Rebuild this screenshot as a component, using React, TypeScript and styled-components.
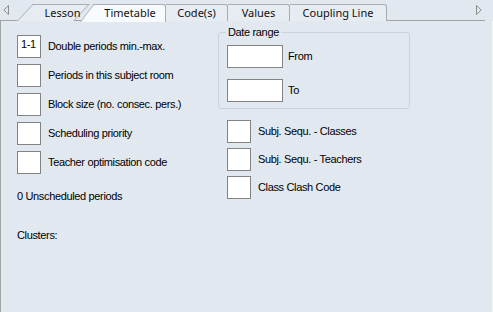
import React from "react";
import styled, { createGlobalStyle, css } from "styled-components";

const Global = createGlobalStyle`
  html, body { margin: 0; padding: 0; background: #e2e8f0; }
  * { box-sizing: border-box; }
`;

const Page = styled.div`
  width: 493px;
  height: 312px;
  background: #e2e8f0;
  display: flex;
  flex-direction: column;
  overflow: hidden;
  font-family: "Liberation Sans", Arial, sans-serif;
  font-size: 11px;
  letter-spacing: -0.35px;
  color: #000;
`;

const TabStrip = styled.div`
  height: 21px;
  display: flex;
  align-items: flex-end;
  position: relative;
  padding-left: 3px;
  &::after {
    content: "";
    position: absolute;
    left: 0;
    width: 485px;
    bottom: 0;
    height: 1px;
    background: #a3a3a3;
  }
`;

const Arrow = styled.svg`
  display: block;
  flex: none;
`;

const ArrowSlot = styled.div<{ $side: "left" | "right" }>`
  width: 8px;
  height: 21px;
  display: flex;
  align-items: center;
  padding-bottom: 2px;
  ${(p) =>
    p.$side === "left"
      ? css`margin-right: 6px;`
      : css`margin-left: auto; margin-right: 9px;`}
`;

type Shape = "parallelogram" | "slantLeft" | "rect";

const Tab = styled.div<{ $shape: Shape; $selected?: boolean; $w: number }>`
  position: relative;
  isolation: isolate;
  flex: none;
  width: ${(p) => p.$w}px;
  height: 17px;
  display: flex;
  align-items: center;
  justify-content: center;
  font-family: "Noto Sans", "Open Sans", sans-serif;
  font-size: 11px;
  letter-spacing: 0;
  color: #111;
  padding-bottom: 1px;
  z-index: ${(p) => (p.$selected ? 3 : 1)};
  ${(p) =>
    p.$shape === "parallelogram" &&
    css`
      &::before {
        content: "";
        position: absolute;
        inset: 0;
        background: #e6ecf2;
        border: 1px solid #a9adb2;
        border-bottom: none;
        transform: skewX(-43deg);
        transform-origin: bottom left;
        z-index: -1;
      }
    `}
  ${(p) =>
    p.$shape === "slantLeft" &&
    css`
      height: 18px;
      margin-bottom: -1px;
      padding-bottom: 2px;
      &::before {
        content: "";
        position: absolute;
        top: 0;
        bottom: 0;
        left: 0;
        width: 40px;
        background: ${p.$selected ? "#f8fbfd" : "#e6ecf2"};
        border-left: 1px solid #a9adb2;
        border-top: 1px solid #a9adb2;
        transform: skewX(-37deg);
        transform-origin: bottom left;
        z-index: -1;
      }
      &::after {
        content: "";
        position: absolute;
        top: 0;
        bottom: 0;
        left: 22px;
        right: 0;
        background: ${p.$selected ? "#f8fbfd" : "#e6ecf2"};
        border-top: 1px solid #a9adb2;
        border-right: 1px solid #a9adb2;
        border-top-right-radius: 3px;
        z-index: -1;
      }
    `}
  ${(p) =>
    p.$shape === "rect" &&
    css`
      background: #e6ecf2;
      border: 1px solid #a9adb2;
      border-bottom: none;
      border-left: none;
      border-top-right-radius: 3px;
    `}
`;

const TabLabel = styled.span<{ $offset?: number }>`
  position: relative;
  left: ${(p) => p.$offset ?? 0}px;
`;

const Panel = styled.div`
  flex: 1;
  display: flex;
  border-left: 1px solid #a3a3a3;
  border-right: 1px solid #f3f6f9;
`;

const LeftColumn = styled.div`
  width: 216px;
  padding: 14px 0 0 16px;
  display: flex;
  flex-direction: column;
`;

const FieldList = styled.div<{ $gap: number }>`
  display: flex;
  flex-direction: column;
  gap: ${(p) => p.$gap}px;
`;

const FieldRow = styled.div<{ $labelGap?: number }>`
  display: flex;
  align-items: center;
  gap: ${(p) => p.$labelGap ?? 7}px;
  height: 23px;
`;

const InputBox = styled.div<{ $w?: number }>`
  width: ${(p) => p.$w ?? 24}px;
  height: 23px;
  flex: none;
  background: #fff;
  border: 1px solid #838383;
  padding: 2px 0 0 3px;
  font-size: 11px;
  line-height: 13px;
`;

const Label = styled.span`
  white-space: nowrap;
  line-height: 13px;
`;

const InfoText = styled.div<{ $mt: number }>`
  margin-top: ${(p) => p.$mt}px;
  line-height: 13px;
`;

const RightColumn = styled.div`
  padding: 5px 0 0 0;
  margin-left: 1px;
  display: flex;
  flex-direction: column;
`;

const GroupBox = styled.fieldset`
  margin: 0;
  width: 192px;
  padding: 6px 8px 6px 8px;
  border: 1px solid #cdd3da;
  border-radius: 3px;
  display: flex;
  flex-direction: column;
  gap: 11px;
`;

const Legend = styled.legend`
  padding: 0 2px;
  margin-left: -1px;
  line-height: 13px;
  font-size: 11px;
`;

const RightChecks = styled(FieldList)`
  margin-top: 11px;
  padding-left: 9px;
`;

const LeftTri = () => (
  <Arrow width="6" height="10" viewBox="0 0 6 10">
    <path d="M5.5 0.5 L0.8 5 L5.5 9.5 Z" fill="#e2e8f0" stroke="#8c8c8c" strokeWidth="1" />
  </Arrow>
);

const RightTri = () => (
  <Arrow width="6" height="10" viewBox="0 0 6 10">
    <path d="M0.5 0.5 L5.2 5 L0.5 9.5 Z" fill="#e2e8f0" stroke="#8c8c8c" strokeWidth="1" />
  </Arrow>
);

const leftFields = [
  { value: "1-1", label: "Double periods min.-max." },
  { value: "", label: "Periods in this subject room" },
  { value: "", label: "Block size (no. consec. pers.)" },
  { value: "", label: "Scheduling priority" },
  { value: "", label: "Teacher optimisation code" },
];

const rightFields = ["Subj. Sequ. - Classes", "Subj. Sequ. - Teachers", "Class Clash Code"];

export default function App() {
  return (
    <Page>
      <Global />
      <TabStrip>
        <ArrowSlot $side="left">
          <LeftTri />
        </ArrowSlot>
        <Tab $shape="parallelogram" $w={57}>
          <TabLabel $offset={17}>Lesson</TabLabel>
        </Tab>
        <Tab $shape="slantLeft" $selected $w={86} style={{ marginLeft: 6 }}>
          <TabLabel $offset={7}>Timetable</TabLabel>
        </Tab>
        <Tab $shape="rect" $w={62}>
          <TabLabel>Code(s)</TabLabel>
        </Tab>
        <Tab $shape="rect" $w={62}>
          <TabLabel>Values</TabLabel>
        </Tab>
        <Tab $shape="rect" $w={97}>
          <TabLabel>Coupling Line</TabLabel>
        </Tab>
        <ArrowSlot $side="right">
          <RightTri />
        </ArrowSlot>
      </TabStrip>
      <Panel>
        <LeftColumn>
          <FieldList $gap={6}>
            {leftFields.map((f) => (
              <FieldRow key={f.label}>
                <InputBox>{f.value}</InputBox>
                <Label>{f.label}</Label>
              </FieldRow>
            ))}
          </FieldList>
          <InfoText $mt={16}>0 Unscheduled periods</InfoText>
          <InfoText $mt={26}>Clusters:</InfoText>
        </LeftColumn>
        <RightColumn>
          <GroupBox>
            <Legend>Date range</Legend>
            <FieldRow $labelGap={5}>
              <InputBox $w={56} />
              <Label>From</Label>
            </FieldRow>
            <FieldRow $labelGap={5}>
              <InputBox $w={56} />
              <Label>To</Label>
            </FieldRow>
          </GroupBox>
          <RightChecks $gap={5}>
            {rightFields.map((l) => (
              <FieldRow key={l}>
                <InputBox />
                <Label>{l}</Label>
              </FieldRow>
            ))}
          </RightChecks>
        </RightColumn>
      </Panel>
    </Page>
  );
}
